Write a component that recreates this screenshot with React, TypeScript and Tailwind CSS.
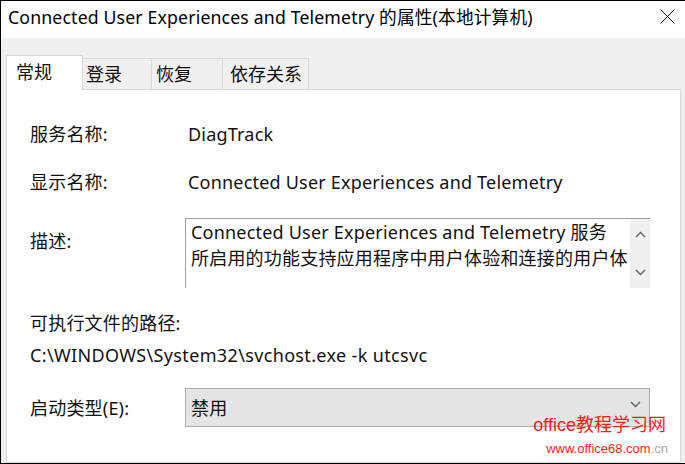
const FONT = { fontFamily: '"Noto Sans", "Noto Sans CJK SC", sans-serif' };

function Chevron({ up = false, className = "" }: { up?: boolean; className?: string }) {
  return (
    <svg width="11" height="7" viewBox="0 0 11 7" className={className}>
      <path
        d={up ? "M1 6 L5.5 1.5 L10 6" : "M1 1 L5.5 5.5 L10 1"}
        fill="none"
        stroke="#606060"
        strokeWidth="1.4"
      />
    </svg>
  );
}

export default function App() {
  return (
    <div
      className="w-[685px] h-[464px] overflow-hidden border-t border-l border-b border-black bg-[#f0f0f0] flex flex-col relative text-[#111]"
      style={FONT}
    >
      {/* title bar */}
      <div className="h-[37px] shrink-0 bg-white flex items-start justify-between pl-[7px] pr-[10px] pt-[6px]">
        <span className="text-[17.7px] leading-[20px] tracking-[0.15px] text-black">
          Connected User Experiences and Telemetry 的属性(本地计算机)
        </span>
        <svg width="15" height="15" viewBox="0 0 15 15" className="mt-[2px]">
          <path d="M0.5 0.5 L14.5 14.5 M14.5 0.5 L0.5 14.5" stroke="#111" strokeWidth="1" />
        </svg>
      </div>

      {/* tabs */}
      <div className="flex items-end pl-[5px] mt-[16px] h-[35px] shrink-0 text-[18px] whitespace-nowrap">
        <div className="h-[35px] w-[77px] bg-white border border-b-0 border-[#d9d9d9] flex items-center pl-[9px] pb-[2px] relative z-10 -mb-px">
          常规
        </div>
        <div className="h-[31px] w-[69px] border-t border-r border-[#d9d9d9] flex items-center pl-[3px]">
          登录
        </div>
        <div className="h-[31px] w-[71px] border-t border-r border-[#d9d9d9] flex items-center pl-[4px]">
          恢复
        </div>
        <div className="h-[31px] w-[86px] border-t border-r border-[#d9d9d9] flex items-center pl-[7px]">
          依存关系
        </div>
      </div>

      {/* panel */}
      <div className="flex-1 ml-[5px] mr-[4px] bg-white border border-[#d9d9d9] pl-[23px] pt-[31px] flex flex-col text-[18px] leading-[26px] tracking-[0.2px]">
        <div className="flex">
          <span className="w-[158px]">服务名称:</span>
          <span>DiagTrack</span>
        </div>
        <div className="flex mt-[22px]">
          <span className="w-[158px]">显示名称:</span>
          <span>Connected User Experiences and Telemetry</span>
        </div>

        <div className="flex mt-[23px]">
          <span className="w-[155px] pt-[10px]">描述:</span>
          <div className="w-[465px] h-[70px] border-t border-l border-[#a0a0a0] flex">
            <div className="flex-1 pl-[5px] pt-0 whitespace-nowrap">
              Connected User Experiences and Telemetry 服务
              <br />
              所启用的功能支持应用程序中用户体验和连接的用户体
            </div>
            <div className="w-[20px] bg-[#f0f0f0] flex flex-col items-center justify-between pt-[12px] pb-[12px]">
              <Chevron up />
              <Chevron />
            </div>
          </div>
        </div>

        <div className="mt-[22px]">可执行文件的路径:</div>
        <div className="mt-[6px] tracking-[0.35px]">C:\WINDOWS\System32\svchost.exe -k utcsvc</div>

        <div className="flex items-center mt-[20px]">
          <span className="w-[155px]">启动类型(E):</span>
          <div className="w-[465px] h-[39px] bg-[#e5e5e5] border border-[#adadad] flex items-center justify-between pl-[5px] pr-[8px]">
            <span>禁用</span>
            <Chevron className="mb-[6px]" />
          </div>
        </div>
      </div>

      {/* watermark */}
      <div
        className="absolute right-[19px] bottom-[6px] flex flex-col items-end pointer-events-none"
        style={{ fontFamily: '"Liberation Sans", "Noto Sans CJK SC", sans-serif' }}
      >
        <span className="text-[18px] leading-[24px] text-[#ff1a1a]">office教程学习网</span>
        <span className="text-[13px] leading-[16px] text-[#ff1a1a] mt-[4px] -mr-[2px]">
          www.office68.com<span className="text-[#a8a8a8]">.cn</span>
        </span>
      </div>
    </div>
  );
}
